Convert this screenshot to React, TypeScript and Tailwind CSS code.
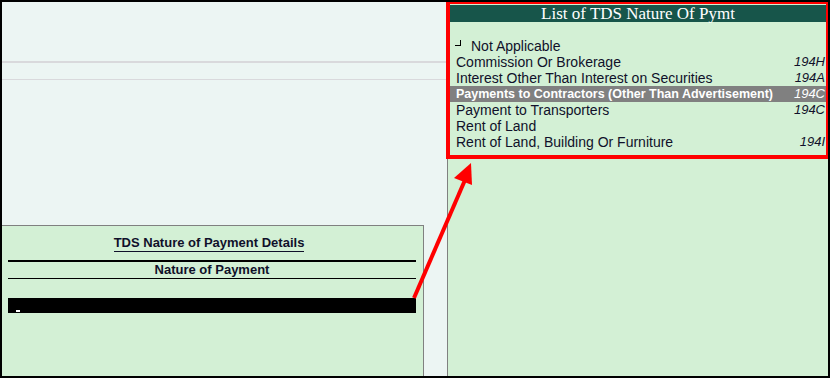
import React from "react"

const items = [
  { name: "Commission Or Brokerage", code: "194H" },
  { name: "Interest Other Than Interest on Securities", code: "194A" },
  { name: "Payments to Contractors (Other Than Advertisement)", code: "194C", active: true },
  { name: "Payment to Transporters", code: "194C" },
  { name: "Rent of Land", code: "" },
  { name: "Rent of Land, Building Or Furniture", code: "194I" },
]

export default function App() {
  return (
    <div className="relative w-[830px] h-[378px] border-2 border-black bg-[#ecf5f3] flex text-[#10102a] font-['Liberation_Sans',Arial,sans-serif] overflow-hidden">
      {/* left side */}
      <div className="w-[445px] flex flex-col">
        <div className="mt-[59px] h-[2px] bg-[#d9d9dc]" />
        <div className="mt-[16px] h-px bg-[#d9d9dc]" />
        <div className="mt-auto w-[422px] h-[151px] border-t border-r border-[#808080] bg-[#d3f0d5] pl-[6px] pr-[7px] pt-[8px]">
          <div className="flex justify-center pr-[6px]">
            <span className="text-[13px] leading-[17px] font-bold border-b border-[#10102a]">
              TDS Nature of Payment Details
            </span>
          </div>
          <div className="mt-[8px] h-[2px] bg-black" />
          <div className="text-center text-[13px] leading-[16px] font-bold">Nature of Payment</div>
          <div className="h-px bg-black" />
          <div className="mt-[19px] h-[15px] bg-black flex items-end pl-[8px] pb-[1px]">
            <div className="w-[4px] h-[2px] bg-white" />
          </div>
        </div>
      </div>

      {/* right panel */}
      <div className="flex-1 border-l border-[#808080] bg-[#d3f0d5] pl-[2px] pr-[2px]">
        <div className="mt-[3px] h-[17px] bg-[#17554a] text-white text-center text-[17px] leading-[18px] font-['Liberation_Serif','Times_New_Roman',serif]">
          List of TDS Nature Of Pymt
        </div>
        <div className="mt-[16px] h-[16px] flex items-center pl-[5px] text-[14px] leading-[16px]">
          <span className="w-[6px] h-[6px] border-r border-b border-black mb-[7px]" />
          <span className="ml-[10px]">Not Applicable</span>
        </div>
        {items.map((it) => (
          <div
            key={it.name}
            className={`h-[16px] flex items-center justify-between pl-[6px] pr-px leading-[16px] ${
              it.active ? "bg-[#808080] text-white font-bold text-[12.5px]" : "text-[14px]"
            }`}
          >
            <span>{it.name}</span>
            <span className="italic text-[13px] font-normal">{it.code}</span>
          </div>
        ))}
      </div>

      {/* annotation */}
      <div className="absolute left-[444px] top-[-2px] w-[384px] h-[159px] border-4 border-[#ff0000]" />
      <svg className="absolute left-0 top-0" width="830" height="378">
        <line x1="412" y1="296" x2="463" y2="178" stroke="#ff0000" strokeWidth="4" />
        <polygon points="469,161 452,176 470,183" fill="#ff0000" />
      </svg>
    </div>
  )
}
